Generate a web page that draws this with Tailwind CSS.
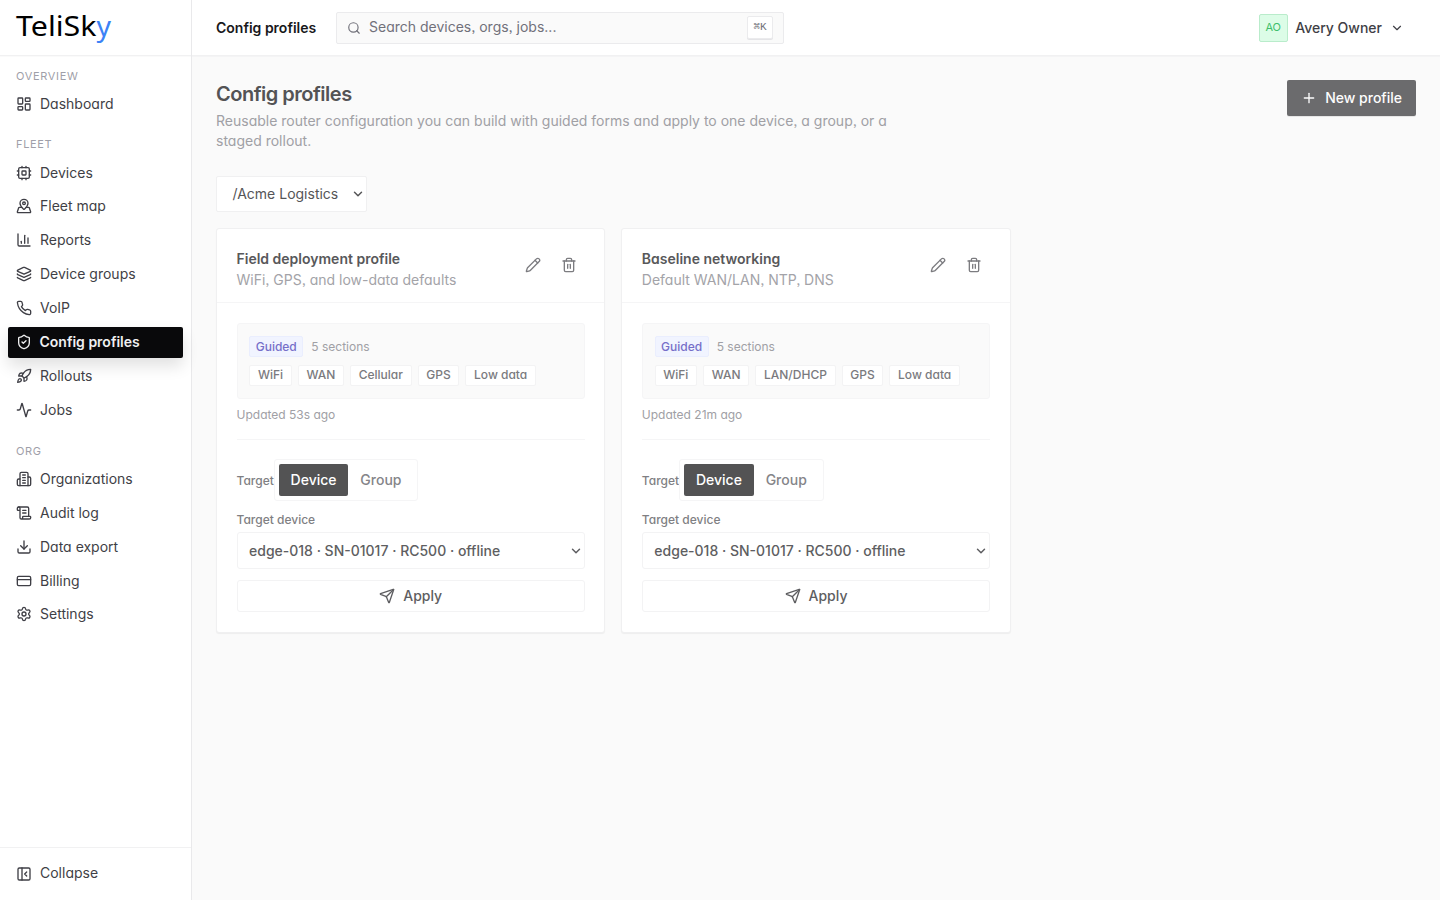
<!DOCTYPE html>
<html lang="en">
<head>
    <meta charset="UTF-8">
    <meta name="viewport" content="width=device-width, initial-scale=1.0">
    <title>Config profiles - TeliSky</title>
    <script src="https://cdn.jsdelivr.net/npm/@tailwindcss/browser@4"></script>
</head>
<body class="flex h-screen overflow-hidden bg-[#fafafa] font-['Inter',sans-serif] text-sm text-[#3f3f46] antialiased [font-feature-settings:'cv11','ss03']">

    <!-- Shared icons -->
    <svg class="hidden">
        <symbol id="chevron" viewBox="0 0 24 24"><path d="m6 9 6 6 6-6"/></symbol>
        <symbol id="pencil" viewBox="0 0 24 24"><path d="M21.174 6.812a1 1 0 0 0-3.986-3.987L3.842 16.174a2 2 0 0 0-.5.83l-1.321 4.352a.5.5 0 0 0 .623.622l4.353-1.32a2 2 0 0 0 .83-.497z"/><path d="m15 5 4 4"/></symbol>
        <symbol id="trash" viewBox="0 0 24 24"><path d="M3 6h18"/><path d="M19 6v14c0 1-1 2-2 2H7c-1 0-2-1-2-2V6"/><path d="M8 6V4c0-1 1-2 2-2h4c1 0 2 1 2 2v2"/><path d="M10 11v6"/><path d="M14 11v6"/></symbol>
        <symbol id="send" viewBox="0 0 24 24"><path d="M14.536 21.686a.5.5 0 0 0 .937-.024l6.5-19a.496.496 0 0 0-.635-.635l-19 6.5a.5.5 0 0 0-.024.937l7.93 3.18a2 2 0 0 1 1.112 1.11z"/><path d="m21.854 2.147-10.94 10.939"/></symbol>
    </svg>

    <!-- Sidebar -->
    <aside class="flex w-48 shrink-0 flex-col border-r border-[#e9e9eb] bg-white">
        <div class="flex h-14 shrink-0 items-center border-b border-[#f1f1f2] px-4 shadow-[0_1px_0_#fafafa]">
            <svg class="h-8 w-24 overflow-visible" viewBox="0 0 96 32" aria-label="TeliSky">
                <text x="0" y="24" font-family="Noto Sans, sans-serif" font-size="28" textLength="80.5" lengthAdjust="spacingAndGlyphs" fill="#000">TeliSk</text>
                <text x="80.5" y="24" font-family="Noto Sans, sans-serif" font-size="28" textLength="14.5" lengthAdjust="spacingAndGlyphs" fill="#3b82f6">y</text>
            </svg>
        </div>

        <nav class="flex flex-1 flex-col gap-4 px-2 pt-3">
            <div class="flex flex-col gap-0.5">
                <div class="mb-[1.4px] h-[17px] px-2 text-[11px] leading-[17px] tracking-[0.06em] text-[#9f9fa9]">OVERVIEW</div>
                <a class="flex h-[31.85px] items-center gap-2 px-2">
                    <svg class="size-4" viewBox="0 0 24 24" fill="none" stroke="currentColor" stroke-width="2" stroke-linecap="round" stroke-linejoin="round"><rect width="7" height="9" x="3" y="3" rx="1"/><rect width="7" height="5" x="14" y="3" rx="1"/><rect width="7" height="9" x="14" y="12" rx="1"/><rect width="7" height="5" x="3" y="16" rx="1"/></svg>
                    Dashboard
                </a>
            </div>

            <div class="flex flex-col gap-0.5">
                <div class="mb-[1.4px] h-[17px] px-2 text-[11px] leading-[17px] tracking-[0.06em] text-[#9f9fa9]">FLEET</div>
                <a class="flex h-[31.85px] items-center gap-2 px-2">
                    <svg class="size-4" viewBox="0 0 24 24" fill="none" stroke="currentColor" stroke-width="2" stroke-linecap="round" stroke-linejoin="round"><rect width="16" height="16" x="4" y="4" rx="2"/><rect width="6" height="6" x="9" y="9" rx="1"/><path d="M15 2v2M15 20v2M2 15h2M2 9h2M20 15h2M20 9h2M9 2v2M9 20v2"/></svg>
                    Devices
                </a>
                <a class="flex h-[31.85px] items-center gap-2 px-2">
                    <svg class="size-4" viewBox="0 0 24 24" fill="none" stroke="currentColor" stroke-width="2" stroke-linecap="round" stroke-linejoin="round"><path d="M18 8c0 3.613-3.869 7.429-5.393 8.795a1 1 0 0 1-1.214 0C9.87 15.429 6 11.613 6 8a6 6 0 0 1 12 0"/><circle cx="12" cy="8" r="2"/><path d="M8.714 14h-3.71a1 1 0 0 0-.948.683l-2.004 6A1 1 0 0 0 3 22h18a1 1 0 0 0 .948-1.316l-2-6a1 1 0 0 0-.949-.684h-3.712"/></svg>
                    Fleet map
                </a>
                <a class="flex h-[31.85px] items-center gap-2 px-2">
                    <svg class="size-4" viewBox="0 0 24 24" fill="none" stroke="currentColor" stroke-width="2" stroke-linecap="round" stroke-linejoin="round"><path d="M3 3v16a2 2 0 0 0 2 2h16"/><path d="M18 17V9"/><path d="M13 17V5"/><path d="M8 17v-3"/></svg>
                    Reports
                </a>
                <a class="flex h-[31.85px] items-center gap-2 px-2">
                    <svg class="size-4" viewBox="0 0 24 24" fill="none" stroke="currentColor" stroke-width="2" stroke-linecap="round" stroke-linejoin="round"><path d="M12.83 2.18a2 2 0 0 0-1.66 0L2.6 6.08a1 1 0 0 0 0 1.83l8.58 3.91a2 2 0 0 0 1.66 0l8.58-3.9a1 1 0 0 0 0-1.83z"/><path d="M2 12a1 1 0 0 0 .58.91l8.6 3.91a2 2 0 0 0 1.65 0l8.58-3.9A1 1 0 0 0 22 12"/><path d="M2 17a1 1 0 0 0 .58.91l8.6 3.91a2 2 0 0 0 1.65 0l8.58-3.9A1 1 0 0 0 22 17"/></svg>
                    Device groups
                </a>
                <a class="flex h-[31.85px] items-center gap-2 px-2">
                    <svg class="size-4" viewBox="0 0 24 24" fill="none" stroke="currentColor" stroke-width="2" stroke-linecap="round" stroke-linejoin="round"><path d="M22 16.92v3a2 2 0 0 1-2.18 2 19.79 19.79 0 0 1-8.63-3.07 19.5 19.5 0 0 1-6-6 19.79 19.79 0 0 1-3.07-8.67A2 2 0 0 1 4.11 2h3a2 2 0 0 1 2 1.72 12.84 12.84 0 0 0 .7 2.81 2 2 0 0 1-.45 2.11L8.09 9.91a16 16 0 0 0 6 6l1.27-1.27a2 2 0 0 1 2.11-.45 12.84 12.84 0 0 0 2.81.7A2 2 0 0 1 22 16.92z"/></svg>
                    VoIP
                </a>
                <a class="mt-[0.7px] -mb-[0.3px] -ml-[0.5px] mr-[0.5px] flex h-[31.85px] items-center gap-2 rounded-xs bg-[#09090b] px-2 font-semibold text-[#f0f0f1] shadow-[0_8px_16px_rgba(0,0,0,0.12)]">
                    <svg class="size-4" viewBox="0 0 24 24" fill="none" stroke="currentColor" stroke-width="2" stroke-linecap="round" stroke-linejoin="round"><path d="M20 13c0 5-3.5 7.5-7.66 8.95a1 1 0 0 1-.67-.01C7.5 20.5 4 18 4 13V6a1 1 0 0 1 1-1c2 0 4.5-1.2 6.24-2.72a1.17 1.17 0 0 1 1.52 0C14.51 3.81 17 5 19 5a1 1 0 0 1 1 1z"/><path d="m9 12 2 2 4-4"/></svg>
                    Config profiles
                </a>
                <a class="flex h-[31.85px] items-center gap-2 px-2">
                    <svg class="size-4" viewBox="0 0 24 24" fill="none" stroke="currentColor" stroke-width="2" stroke-linecap="round" stroke-linejoin="round"><path d="M4.5 16.5c-1.5 1.26-2 5-2 5s3.74-.5 5-2c.71-.84.7-2.13-.09-2.91a2.18 2.18 0 0 0-2.91-.09z"/><path d="m12 15-3-3a22 22 0 0 1 2-3.95A12.88 12.88 0 0 1 22 2c0 2.72-.78 7.5-6 11a22.35 22.35 0 0 1-4 2z"/><path d="M9 12H4s.55-3.03 2-4c1.62-1.08 5 0 5 0"/><path d="M12 15v5s3.03-.55 4-2c1.08-1.62 0-5 0-5"/></svg>
                    Rollouts
                </a>
                <a class="flex h-[31.85px] items-center gap-2 px-2">
                    <svg class="size-4" viewBox="0 0 24 24" fill="none" stroke="currentColor" stroke-width="2" stroke-linecap="round" stroke-linejoin="round"><path d="M22 12h-2.48a2 2 0 0 0-1.93 1.46l-2.35 8.36a.25.25 0 0 1-.48 0L9.24 2.18a.25.25 0 0 0-.48 0l-2.35 8.36A2 2 0 0 1 4.49 12H2"/></svg>
                    Jobs
                </a>
            </div>

            <div class="mt-px flex flex-col gap-0.5">
                <div class="mb-[1.4px] h-[17px] px-2 text-[11px] leading-[17px] tracking-[0.06em] text-[#9f9fa9]">ORG</div>
                <a class="flex h-[31.85px] items-center gap-2 px-2">
                    <svg class="size-4" viewBox="0 0 24 24" fill="none" stroke="currentColor" stroke-width="2" stroke-linecap="round" stroke-linejoin="round"><path d="M6 22V4a2 2 0 0 1 2-2h8a2 2 0 0 1 2 2v18Z"/><path d="M6 12H4a2 2 0 0 0-2 2v6a2 2 0 0 0 2 2h2"/><path d="M18 9h2a2 2 0 0 1 2 2v9a2 2 0 0 1-2 2h-2"/><path d="M10 6h4"/><path d="M10 10h4"/><path d="M10 14h4"/><path d="M10 18h4"/></svg>
                    Organizations
                </a>
                <a class="flex h-[31.85px] items-center gap-2 px-2">
                    <svg class="size-4" viewBox="0 0 24 24" fill="none" stroke="currentColor" stroke-width="2" stroke-linecap="round" stroke-linejoin="round"><path d="M15 12h-5"/><path d="M15 8h-5"/><path d="M19 17V5a2 2 0 0 0-2-2H4"/><path d="M8 21h12a2 2 0 0 0 2-2v-1a1 1 0 0 0-1-1H11a1 1 0 0 0-1 1v1a2 2 0 1 1-4 0V5a2 2 0 1 0-4 0v2a1 1 0 0 0 1 1h3"/></svg>
                    Audit log
                </a>
                <a class="flex h-[31.85px] items-center gap-2 px-2">
                    <svg class="size-4" viewBox="0 0 24 24" fill="none" stroke="currentColor" stroke-width="2" stroke-linecap="round" stroke-linejoin="round"><path d="M21 15v4a2 2 0 0 1-2 2H5a2 2 0 0 1-2-2v-4"/><path d="m7 10 5 5 5-5"/><path d="M12 15V3"/></svg>
                    Data export
                </a>
                <a class="flex h-[31.85px] items-center gap-2 px-2">
                    <svg class="size-4" viewBox="0 0 24 24" fill="none" stroke="currentColor" stroke-width="2" stroke-linecap="round" stroke-linejoin="round"><rect width="20" height="14" x="2" y="5" rx="2"/><path d="M2 10h20"/></svg>
                    Billing
                </a>
                <a class="flex h-[31.85px] items-center gap-2 px-2">
                    <svg class="size-4" viewBox="0 0 24 24" fill="none" stroke="currentColor" stroke-width="2" stroke-linecap="round" stroke-linejoin="round"><path d="M9.671 4.136a2.34 2.34 0 0 1 4.659 0 2.34 2.34 0 0 0 3.319 1.915 2.34 2.34 0 0 1 2.33 4.033 2.34 2.34 0 0 0 0 3.831 2.34 2.34 0 0 1-2.33 4.033 2.34 2.34 0 0 0-3.319 1.915 2.34 2.34 0 0 1-4.659 0 2.34 2.34 0 0 0-3.32-1.915 2.34 2.34 0 0 1-2.33-4.033 2.34 2.34 0 0 0 0-3.831A2.34 2.34 0 0 1 6.35 6.051a2.34 2.34 0 0 0 3.319-1.915"/><circle cx="12" cy="12" r="3"/></svg>
                    Settings
                </a>
            </div>
        </nav>

        <div class="flex h-[53px] shrink-0 items-center gap-2 border-t border-[#f1f1f2] px-4">
            <svg class="size-4" viewBox="0 0 24 24" fill="none" stroke="currentColor" stroke-width="2" stroke-linecap="round" stroke-linejoin="round"><rect width="18" height="18" x="3" y="3" rx="2"/><path d="M9 3v18"/><path d="m16 15-3-3 3-3"/></svg>
            <span class="pb-0.5">Collapse</span>
        </div>
    </aside>

    <div class="flex min-w-0 flex-1 flex-col">
        <!-- Top bar -->
        <header class="flex h-14 shrink-0 items-center border-b border-[#f1f1f2] bg-white px-6 shadow-[0_1px_0_#f4f4f5]">
            <div class="w-[120px] font-semibold text-[#18181b]">Config profiles</div>
            <div class="flex h-8 w-[448px] items-center gap-2 rounded-xs border border-[#ebebed] bg-[#fafafa] px-2.5 text-[#71717a]">
                <svg class="size-3.5" viewBox="0 0 24 24" fill="none" stroke="currentColor" stroke-width="2" stroke-linecap="round" stroke-linejoin="round"><circle cx="11" cy="11" r="8"/><path d="m21 21-4.3-4.3"/></svg>
                <span class="flex-1 pb-0.5">Search devices, orgs, jobs...</span>
                <kbd class="flex h-[23px] w-[26px] items-center justify-center rounded-xs border border-[#ebebed] bg-white pt-px font-['Liberation_Mono',monospace] text-[11px] shadow-[0_1px_0_#e4e4e7]">⌘K</kbd>
            </div>
            <div class="ml-auto flex items-center gap-2 pr-3">
                <div class="-mr-px flex h-[28px] w-[29px] items-center justify-center rounded-xs border border-[#b9eccb] bg-[#dcfce7] pr-px text-[11px] text-[#3fbf6c]">AO</div>
                <span class="font-medium">Avery Owner</span>
                <svg class="size-3.5" viewBox="0 0 24 24" fill="none" stroke="currentColor" stroke-width="2" stroke-linecap="round" stroke-linejoin="round"><use href="#chevron"/></svg>
            </div>
        </header>

        <main class="flex flex-col p-6">
            <div class="flex items-start justify-between">
                <div class="max-w-2xl">
                    <h1 class="text-xl font-semibold tracking-tight text-[#535355]">Config profiles</h1>
                    <p class="mt-[3px] text-[#a0a0a5]">Reusable router configuration you can build with guided forms and apply to one device, a group, or a staged rollout.</p>
                </div>
                <button class="flex h-9 items-center gap-2 rounded-xs bg-[#6b6b6d] px-3.5 font-medium text-[#fdfdfd] shadow-[0_1px_0_rgba(0,0,0,0.08)]">
                    <svg class="size-4" viewBox="0 0 24 24" fill="none" stroke="currentColor" stroke-width="2" stroke-linecap="round" stroke-linejoin="round"><path d="M5 12h14"/><path d="M12 5v14"/></svg>
                    New profile
                </button>
            </div>

            <div class="mt-[25px] flex h-9 w-[151px] items-center justify-between rounded-xs border border-[#f0f0f1] bg-white pr-px pl-[15.5px] text-[#555557]">
                /Acme Logistics
                <svg class="size-3.5" viewBox="0 0 24 24" fill="none" stroke="currentColor" stroke-width="2.5" stroke-linecap="round" stroke-linejoin="round"><use href="#chevron"/></svg>
            </div>

            <!-- Profile cards -->
            <div class="mt-4 grid w-[1200px] grid-cols-3 gap-4">
                <section class="rounded-[3px] border border-[#f0f0f1] bg-white shadow-[0_1px_1px_rgba(0,0,0,0.05)]">
                    <div class="flex h-[74px] items-center justify-between border-b border-[#f5f5f6] px-[19.5px]">
                        <div class="pt-2">
                            <h2 class="font-semibold text-[#58585a]">Field deployment profile</h2>
                            <p class="mt-px text-[#a3a3a8]">WiFi, GPS, and low-data defaults</p>
                        </div>
                        <div class="flex gap-1 pb-0.5 text-[#7c7c80]">
                            <button class="flex size-8 items-center justify-center"><svg class="size-4" fill="none" stroke="currentColor" stroke-width="2" stroke-linecap="round" stroke-linejoin="round"><use href="#pencil"/></svg></button>
                            <button class="flex size-8 items-center justify-center"><svg class="size-4" fill="none" stroke="currentColor" stroke-width="2" stroke-linecap="round" stroke-linejoin="round"><use href="#trash"/></svg></button>
                        </div>
                    </div>
                    <div class="px-[19.5px] py-5">
                        <div class="flex flex-col gap-2 rounded-[3px] border border-[#f5f5f6] bg-[#fafafa] px-[11.7px] py-3 text-xs">
                            <div class="flex items-center gap-2">
                                <span class="flex h-[21px] items-center rounded-xs border border-[#eaeefe] bg-[#f1f4ff] px-[5.5px] font-medium text-[#766fc9]">Guided</span>
                                <span class="text-[#a0a0a5]">5 sections</span>
                            </div>
                            <div class="flex gap-1.5 font-medium text-[#7a7a7e]">
                                <span class="flex h-[21px] items-center rounded-xs border border-[#f3f3f4] bg-white px-[7.7px] pb-0.5">WiFi</span>
                                <span class="flex h-[21px] items-center rounded-xs border border-[#f3f3f4] bg-white px-[7.7px] pb-0.5">WAN</span>
                                <span class="flex h-[21px] items-center rounded-xs border border-[#f3f3f4] bg-white px-[7.7px] pb-0.5">Cellular</span>
                                <span class="flex h-[21px] items-center rounded-xs border border-[#f3f3f4] bg-white px-[7.7px] pb-0.5">GPS</span>
                                <span class="flex h-[21px] items-center rounded-xs border border-[#f3f3f4] bg-white px-[7.7px] pb-0.5">Low data</span>
                            </div>
                        </div>
                        <p class="mt-2 text-xs text-[#a0a0a5]">Updated 53s ago</p>
                        <div class="mt-4 border-t border-[#f5f5f6] pt-[19px]">
                            <div class="flex items-center">
                                <span class="pt-0.5 text-xs font-medium text-[#7f7f83]">Target</span>
                                <div class="flex rounded-[3px] border border-[#f5f5f6] p-1 font-medium">
                                    <span class="flex h-8 items-center rounded-xs bg-[#535354] px-[11.8px] text-white">Device</span>
                                    <span class="flex h-8 items-center px-3 text-[#858589]">Group</span>
                                </div>
                            </div>
                            <div class="mt-[11px] text-xs font-medium text-[#7f7f83]">Target device</div>
                            <div class="mt-1 flex h-[37px] items-center justify-between rounded-[3px] border border-[#f3f3f4] pr-px pl-[11.5px] font-medium text-[#5e5e61]">
                                edge-018 · SN-01017 · RC500 · offline
                                <svg class="size-3.5" fill="none" stroke="currentColor" stroke-width="2.5" stroke-linecap="round" stroke-linejoin="round"><use href="#chevron"/></svg>
                            </div>
                            <button class="mt-[11px] flex h-8 w-full items-center justify-center gap-2 rounded-[3px] border border-[#f3f3f4] font-medium text-[#5e5e61]">
                                <svg class="size-4" fill="none" stroke="currentColor" stroke-width="2" stroke-linecap="round" stroke-linejoin="round"><use href="#send"/></svg>
                                Apply
                            </button>
                        </div>
                    </div>
                </section>

                <section class="rounded-[3px] border border-[#f0f0f1] bg-white shadow-[0_1px_1px_rgba(0,0,0,0.05)]">
                    <div class="flex h-[74px] items-center justify-between border-b border-[#f5f5f6] px-[19.5px]">
                        <div class="pt-2">
                            <h2 class="font-semibold text-[#58585a]">Baseline networking</h2>
                            <p class="mt-px text-[#a3a3a8]">Default WAN/LAN, NTP, DNS</p>
                        </div>
                        <div class="flex gap-1 pb-0.5 text-[#7c7c80]">
                            <button class="flex size-8 items-center justify-center"><svg class="size-4" fill="none" stroke="currentColor" stroke-width="2" stroke-linecap="round" stroke-linejoin="round"><use href="#pencil"/></svg></button>
                            <button class="flex size-8 items-center justify-center"><svg class="size-4" fill="none" stroke="currentColor" stroke-width="2" stroke-linecap="round" stroke-linejoin="round"><use href="#trash"/></svg></button>
                        </div>
                    </div>
                    <div class="px-[19.5px] py-5">
                        <div class="flex flex-col gap-2 rounded-[3px] border border-[#f5f5f6] bg-[#fafafa] px-[11.7px] py-3 text-xs">
                            <div class="flex items-center gap-2">
                                <span class="flex h-[21px] items-center rounded-xs border border-[#eaeefe] bg-[#f1f4ff] px-[5.5px] font-medium text-[#766fc9]">Guided</span>
                                <span class="text-[#a0a0a5]">5 sections</span>
                            </div>
                            <div class="flex gap-1.5 font-medium text-[#7a7a7e]">
                                <span class="flex h-[21px] items-center rounded-xs border border-[#f3f3f4] bg-white px-[7.7px] pb-0.5">WiFi</span>
                                <span class="flex h-[21px] items-center rounded-xs border border-[#f3f3f4] bg-white px-[7.7px] pb-0.5">WAN</span>
                                <span class="flex h-[21px] items-center rounded-xs border border-[#f3f3f4] bg-white px-[7.7px] pb-0.5">LAN/DHCP</span>
                                <span class="flex h-[21px] items-center rounded-xs border border-[#f3f3f4] bg-white px-[7.7px] pb-0.5">GPS</span>
                                <span class="flex h-[21px] items-center rounded-xs border border-[#f3f3f4] bg-white px-[7.7px] pb-0.5">Low data</span>
                            </div>
                        </div>
                        <p class="mt-2 text-xs text-[#a0a0a5]">Updated 21m ago</p>
                        <div class="mt-4 border-t border-[#f5f5f6] pt-[19px]">
                            <div class="flex items-center">
                                <span class="pt-0.5 text-xs font-medium text-[#7f7f83]">Target</span>
                                <div class="flex rounded-[3px] border border-[#f5f5f6] p-1 font-medium">
                                    <span class="flex h-8 items-center rounded-xs bg-[#535354] px-[11.8px] text-white">Device</span>
                                    <span class="flex h-8 items-center px-3 text-[#858589]">Group</span>
                                </div>
                            </div>
                            <div class="mt-[11px] text-xs font-medium text-[#7f7f83]">Target device</div>
                            <div class="mt-1 flex h-[37px] items-center justify-between rounded-[3px] border border-[#f3f3f4] pr-px pl-[11.5px] font-medium text-[#5e5e61]">
                                edge-018 · SN-01017 · RC500 · offline
                                <svg class="size-3.5" fill="none" stroke="currentColor" stroke-width="2.5" stroke-linecap="round" stroke-linejoin="round"><use href="#chevron"/></svg>
                            </div>
                            <button class="mt-[11px] flex h-8 w-full items-center justify-center gap-2 rounded-[3px] border border-[#f3f3f4] font-medium text-[#5e5e61]">
                                <svg class="size-4" fill="none" stroke="currentColor" stroke-width="2" stroke-linecap="round" stroke-linejoin="round"><use href="#send"/></svg>
                                Apply
                            </button>
                        </div>
                    </div>
                </section>
            </div>
        </main>
    </div>
</body>
</html>
